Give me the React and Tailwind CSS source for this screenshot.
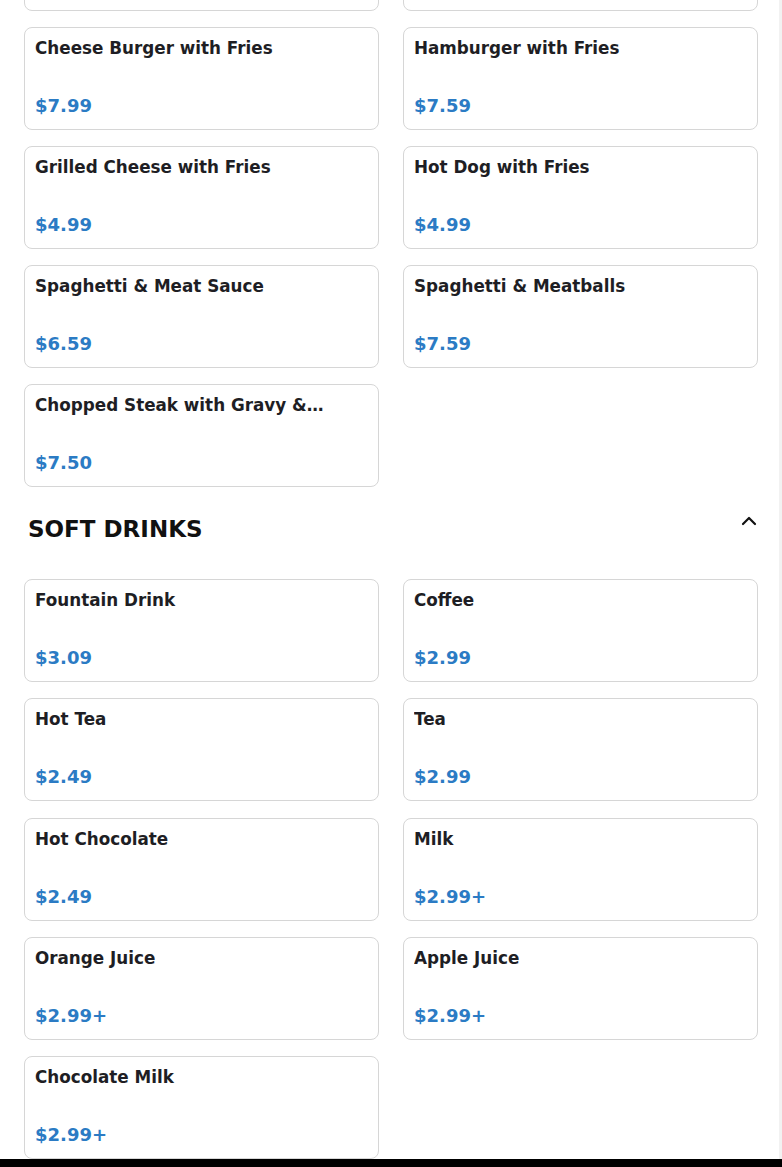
import React from "react";

const font = { fontFamily: '"DejaVu Sans", Verdana, sans-serif' };

const top = [
  ["", ""],
  ["", ""],
  ["Cheese Burger with Fries", "$7.99"],
  ["Hamburger with Fries", "$7.59"],
  ["Grilled Cheese with Fries", "$4.99"],
  ["Hot Dog with Fries", "$4.99"],
  ["Spaghetti & Meat Sauce", "$6.59"],
  ["Spaghetti & Meatballs", "$7.59"],
  ["Chopped Steak with Gravy & Onions", "$7.50"],
];

const drinks = [
  ["Fountain Drink", "$3.09"],
  ["Coffee", "$2.99"],
  ["Hot Tea", "$2.49"],
  ["Tea", "$2.99"],
  ["Hot Chocolate", "$2.49"],
  ["Milk", "$2.99+"],
  ["Orange Juice", "$2.99+"],
  ["Apple Juice", "$2.99+"],
  ["Chocolate Milk", "$2.99+"],
];

function Card({ name, price }) {
  return (
    <div className="h-[103px] flex flex-col justify-between rounded-lg border border-[#d6d6d6] bg-white px-[10px] pt-[8px] pb-[9px]">
      <div className="text-[16.8px] leading-6 font-bold text-[#1e1e24] line-clamp-1">{name}</div>
      <div className="text-[18px] leading-7 font-bold text-[#2b7bc4]">{price}</div>
    </div>
  );
}

export default function App() {
  return (
    <div className="relative flex flex-col h-[1167px] overflow-hidden bg-white" style={font}>
      <div className="px-6 -mt-[92px] grid grid-cols-2 gap-x-6 gap-y-4">
        {top.map(([n, p], i) => (
          <Card key={i} name={n} price={p} />
        ))}
      </div>
      <div className="mt-[26px] px-6 flex items-start justify-between">
        <h2 className="pl-1 text-[23px] leading-8 font-bold text-[#111]">SOFT DRINKS</h2>
        <button className="-mt-[4px] w-[24px] h-[24px] flex items-center justify-center -mr-[3px]">
          <svg width="24" height="24" viewBox="0 0 24 24" fill="none" stroke="#111" strokeWidth="2.2" strokeLinecap="round" strokeLinejoin="round">
            <path d="m18 15-6-6-6 6" />
          </svg>
        </button>
      </div>
      <div className="mt-[34px] px-6 grid grid-cols-2 gap-x-6 gap-y-[16.3px]">
        {drinks.map(([n, p], i) => (
          <Card key={i} name={n} price={p} />
        ))}
      </div>
      <div className="flex-1 bg-black" />
      <div className="absolute right-0 top-0 bottom-[8px] w-[3px] bg-[#f2f2f2]" />
    </div>
  );
}
